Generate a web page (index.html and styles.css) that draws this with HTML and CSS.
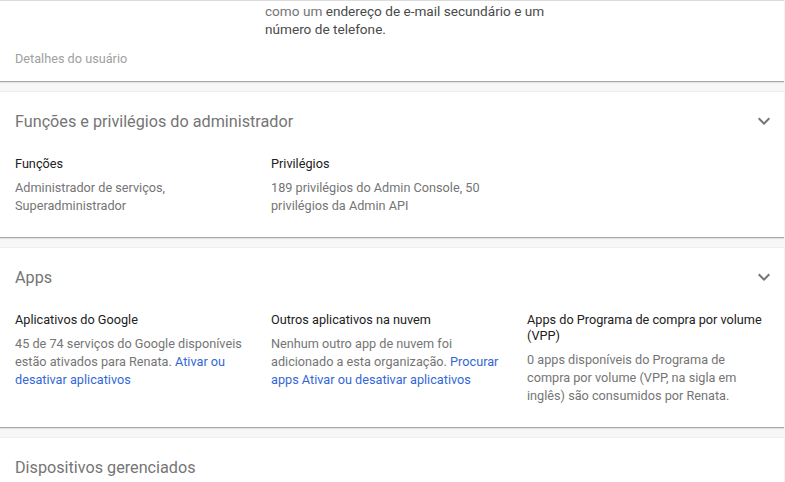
FILE: index.html
```html
<!DOCTYPE html>
<html lang="pt-BR">
<head>
<meta charset="utf-8">
<link rel="stylesheet" href="styles.css">
</head>
<body>
<div class="page">
  <section class="card card-top">
    <p class="note">como um <span class="strong">endereço de e-mail secundário e um<br>número de telefone.</span></p>
    <div class="footer-label">Detalhes do usuário</div>
  </section>

  <section class="card">
    <div class="card-header">
      <h2 class="title">Funções e privilégios do administrador</h2>
      <svg class="chevron" viewBox="0 0 24 24" width="24" height="24"><path d="M16.59 8.59L12 13.17 7.41 8.59 6 10l6 6 6-6z"/></svg>
    </div>
    <div class="grid">
      <div class="col">
        <div class="col-title">Funções</div>
        <div class="col-text">Administrador de serviços, Superadministrador</div>
      </div>
      <div class="col">
        <div class="col-title">Privilégios</div>
        <div class="col-text">189 privilégios do Admin Console, 50 privilégios da Admin API</div>
      </div>
    </div>
  </section>

  <section class="card">
    <div class="card-header">
      <h2 class="title">Apps</h2>
      <svg class="chevron" viewBox="0 0 24 24" width="24" height="24"><path d="M16.59 8.59L12 13.17 7.41 8.59 6 10l6 6 6-6z"/></svg>
    </div>
    <div class="grid">
      <div class="col">
        <div class="col-title">Aplicativos do Google</div>
        <div class="col-text">45 de 74 serviços do Google disponíveis estão ativados para Renata. <a class="link" href="#">Ativar ou desativar aplicativos</a></div>
      </div>
      <div class="col">
        <div class="col-title">Outros aplicativos na nuvem</div>
        <div class="col-text">Nenhum outro app de nuvem foi adicionado a esta organização. <a class="link" href="#">Procurar apps</a> <a class="link" href="#">Ativar ou desativar aplicativos</a></div>
      </div>
      <div class="col">
        <div class="col-title">Apps do Programa de compra por volume (VPP)</div>
        <div class="col-text">0 apps disponíveis do Programa de compra por volume (VPP, na sigla em inglês) são consumidos por Renata.</div>
      </div>
    </div>
  </section>

  <section class="card">
    <div class="card-header">
      <h2 class="title">Dispositivos gerenciados</h2>
    </div>
  </section>
</div>
</body>
</html>
```

FILE: styles.css
```css
html, body {
  margin: 0;
  padding: 0;
}
body {
  background: #f7f7f7;
  font-family: Roboto, "Liberation Sans", Arial, sans-serif;
  color: #212121;
  overflow: hidden;
}
.page {
  display: flex;
  flex-direction: column;
  gap: 9px;
  margin-right: 1px;
}
.card {
  background: #fff;
  border-top: 1px solid #efefef;
  border-bottom: 1px solid #a8a8a8;
  box-shadow: 0 1px 1px rgba(0, 0, 0, 0.08);
}
.card-top {
  border-top: 1px solid #dcdcdc;
  padding: 1px 0 13px 0;
}
.note {
  margin: 0;
  padding-left: 265px;
  width: 300px;
  font-size: 13.6px;
  line-height: 18px;
  color: #757575;
}
.strong {
  color: #4a4a4a;
}
.footer-label {
  margin-top: 12px;
  padding-left: 15px;
  font-size: 12.7px;
  line-height: 18px;
  color: #a0a0a0;
}
.card-header {
  height: 58px;
  display: flex;
  align-items: center;
  justify-content: space-between;
  padding: 0 8px 0 15px;
}
.title {
  margin: 0;
  font-size: 16.2px;
  font-weight: 400;
  color: #757575;
}
.chevron {
  fill: #757575;
  display: block;
}
.grid {
  display: grid;
  grid-template-columns: repeat(3, 240px);
  column-gap: 16px;
  padding: 6px 0 22px 15px;
}
.col-title {
  font-size: 12.7px;
  line-height: 16px;
  color: #212121;
}
.col-text {
  margin-top: 7px;
  font-size: 12.7px;
  line-height: 18px;
  color: #757575;
}
.link {
  color: #3367d6;
  text-decoration: none;
}
```
